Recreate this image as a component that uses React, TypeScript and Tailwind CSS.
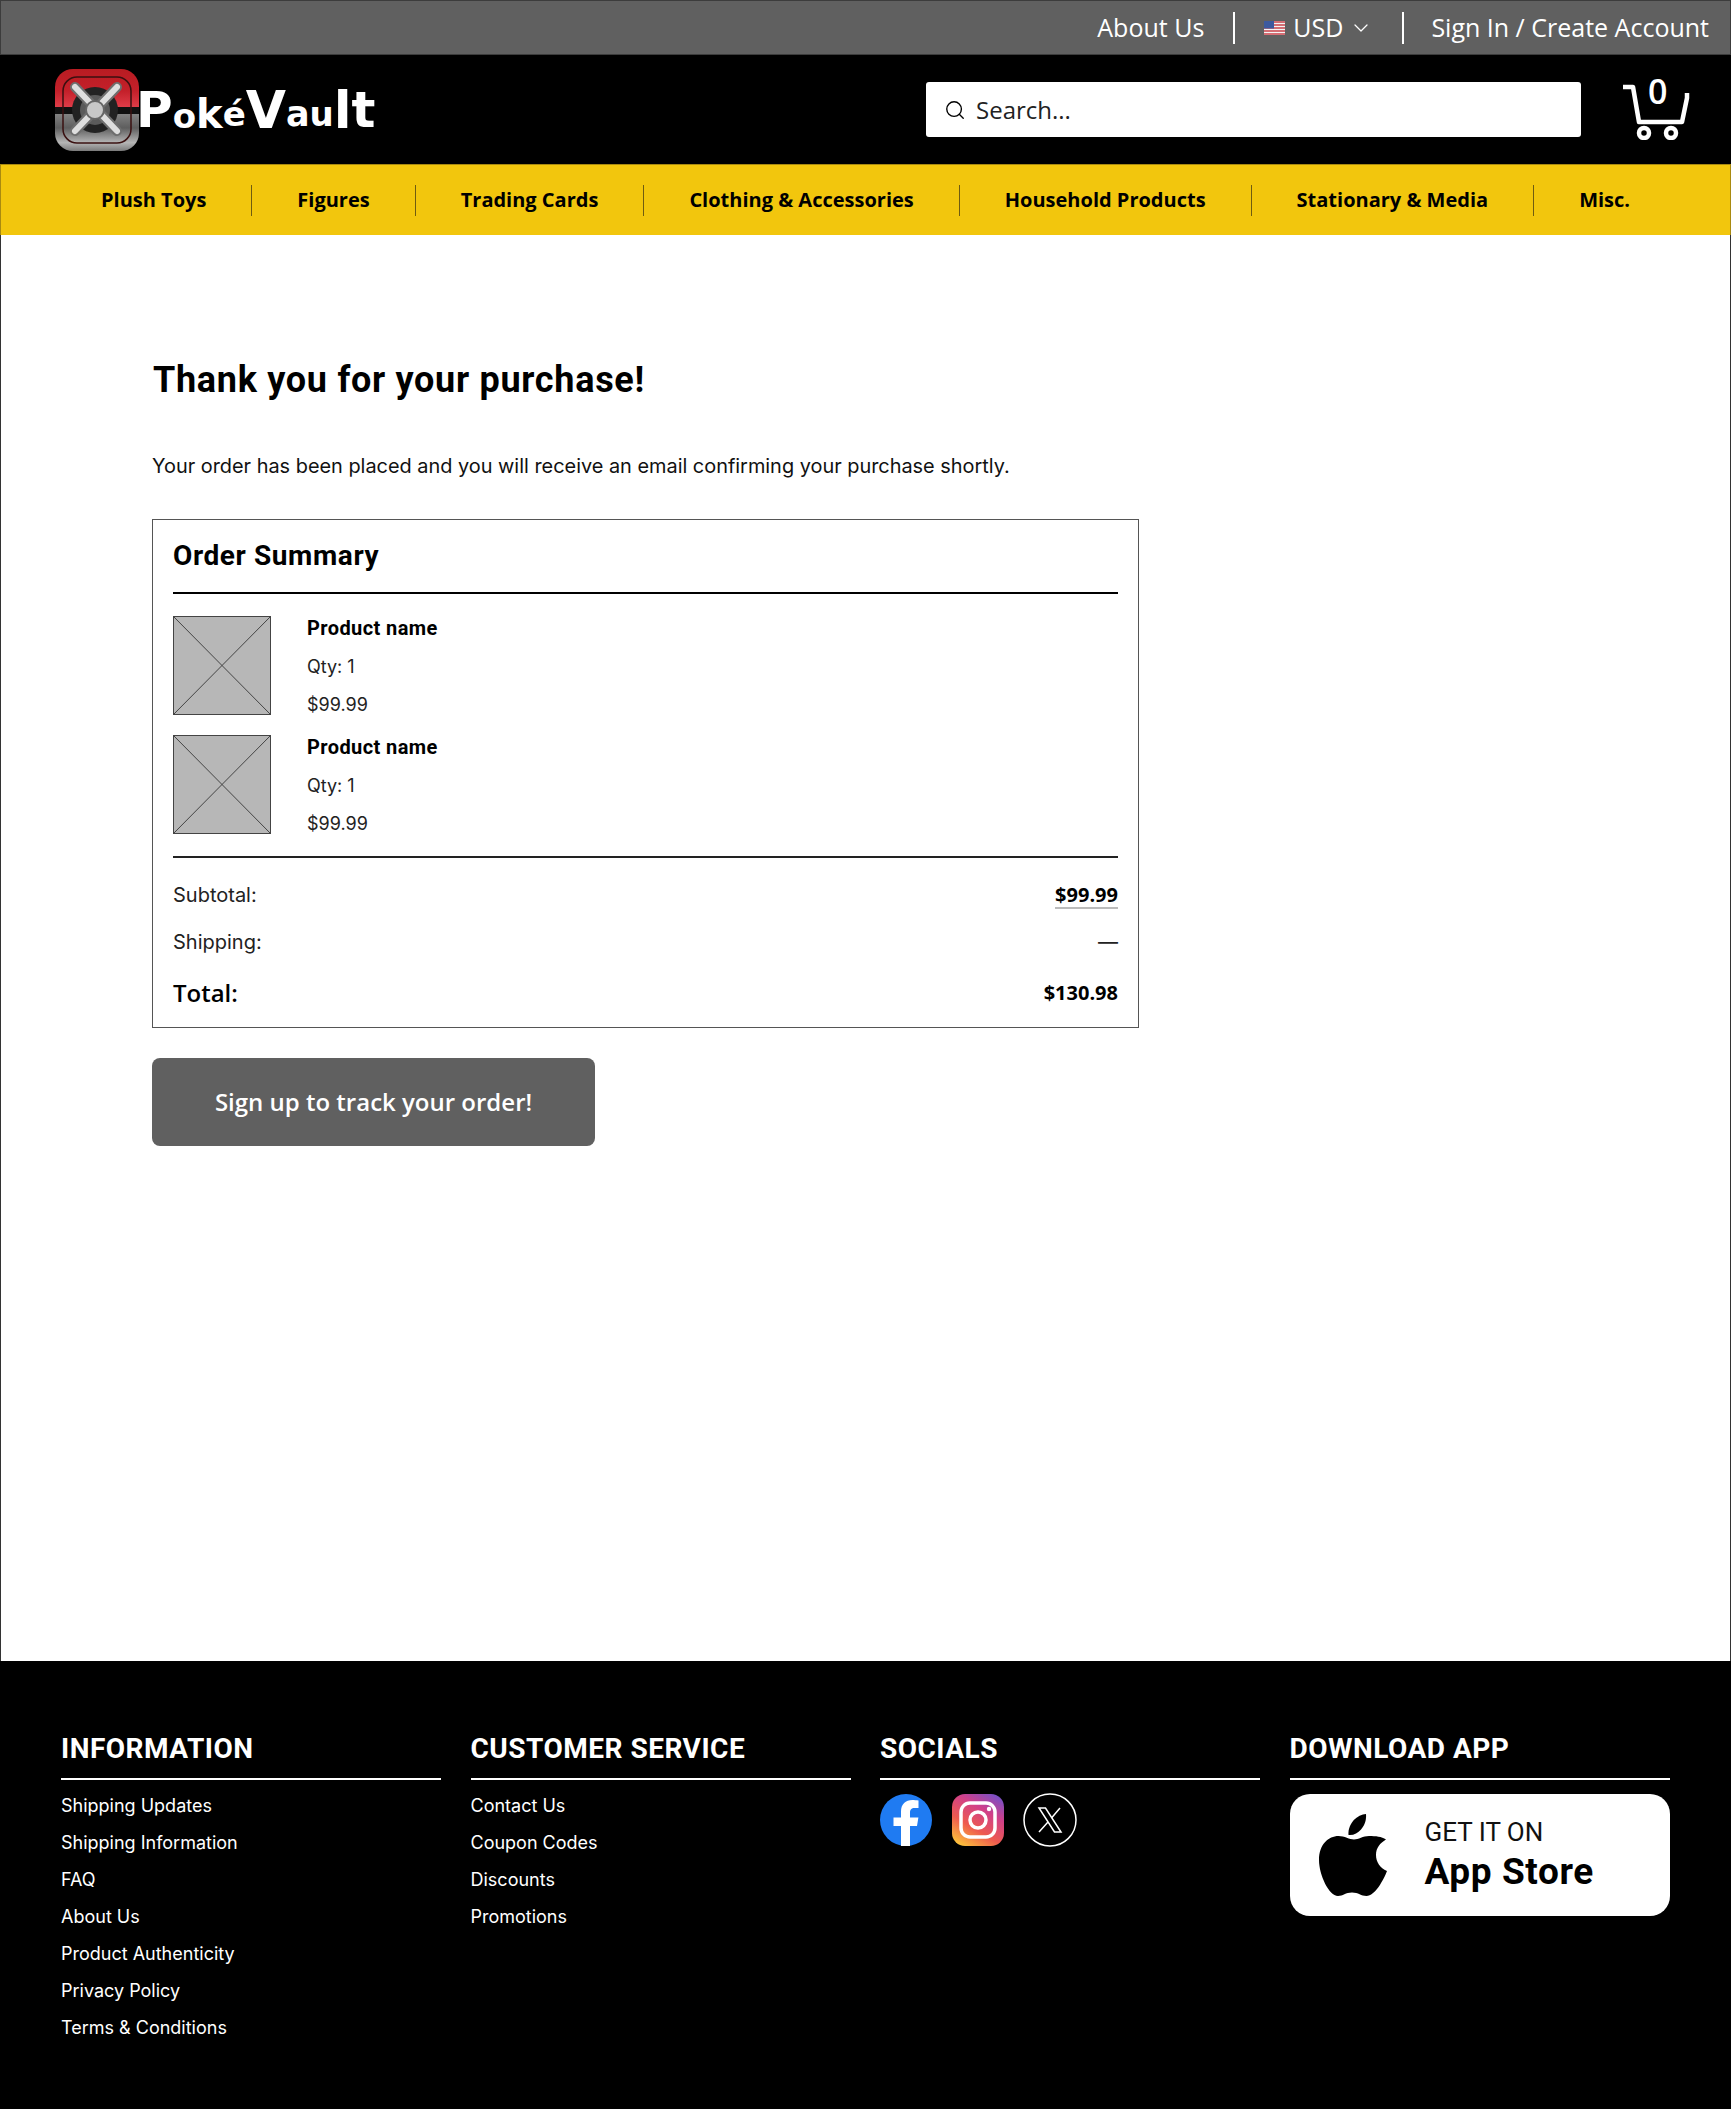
import { ChevronDown, Search } from "lucide-react";

const NAV = [
  "Plush Toys",
  "Figures",
  "Trading Cards",
  "Clothing & Accessories",
  "Household Products",
  "Stationary & Media",
  "Misc.",
];

const FOOTER_INFO = [
  "Shipping Updates",
  "Shipping Information",
  "FAQ",
  "About Us",
  "Product Authenticity",
  "Privacy Policy",
  "Terms & Conditions",
];

const FOOTER_SERVICE = ["Contact Us", "Coupon Codes", "Discounts", "Promotions"];

const OPEN = "font-['Open_Sans',sans-serif]";
// Exo 2 isn't installed, Roboto with some tracking is the nearest squarish bold
const HEAD = "font-['Roboto',sans-serif]";

function LogoMark() {
  return (
    <svg width="84" height="82" viewBox="0 0 84 82" className="shrink-0">
      <defs>
        <linearGradient id="red" x1="0" y1="0" x2="0" y2="1">
          <stop offset="0" stopColor="#b81c22" />
          <stop offset="0.55" stopColor="#c4202a" />
          <stop offset="1" stopColor="#e2404c" />
        </linearGradient>
        <linearGradient id="steel" x1="0" y1="0" x2="0" y2="1">
          <stop offset="0" stopColor="#8f8f8f" />
          <stop offset="0.45" stopColor="#5e5e5e" />
          <stop offset="0.8" stopColor="#b5b5b5" />
          <stop offset="1" stopColor="#7a7a7a" />
        </linearGradient>
        <clipPath id="mark">
          <rect width="84" height="82" rx="18" />
        </clipPath>
      </defs>
      <g clipPath="url(#mark)">
        <rect width="84" height="40" fill="url(#red)" />
        <rect y="40" width="84" height="42" fill="url(#steel)" />
        <rect y="38" width="84" height="7" fill="#111" />
      </g>
      <rect x="8" y="8" width="68" height="66" rx="14" fill="none" stroke="#3a1010" strokeWidth="1.5" />
      <circle cx="40" cy="41" r="23" fill="#222" />
      <circle cx="40" cy="41" r="15" fill="#5a5a5a" />
      <path d="M20 18 62 62M62 18 20 62" stroke="#6e6e6e" strokeWidth="10" strokeLinecap="round" />
      <path d="M20 18 62 62M62 18 20 62" stroke="#dedede" strokeWidth="6" strokeLinecap="round" />
      <circle cx="40" cy="41" r="9" fill="#c8c8c8" stroke="#666" strokeWidth="2" />
    </svg>
  );
}

function Wordmark() {
  return (
    <span className="ml-[-3px] flex items-center font-['DejaVu_Sans',sans-serif] font-bold text-white">
      <span className="inline-block text-[50px] leading-none">P</span>
      <span className="inline-block translate-y-[6px] text-[34px] leading-none">o</span>
      <span className="inline-block translate-y-[4px] text-[40px] leading-none">k</span>
      <span className="inline-block translate-y-[4px] text-[34px] leading-none">é</span>
      <span className="inline-block text-[52px] leading-none">V</span>
      <span className="inline-block translate-y-[5px] text-[35px] leading-none">a</span>
      <span className="inline-block translate-y-[4px] text-[34px] leading-none">u</span>
      <span className="inline-block text-[52px] leading-none">l</span>
      <span className="inline-block text-[50px] leading-none">t</span>
    </span>
  );
}

function UsFlag() {
  return (
    <svg width="21" height="14" viewBox="0 0 21 14">
      <rect width="21" height="14" fill="#f4f4f4" />
      <path d="M0 1h21M0 4h21M0 7h21M0 10h21M0 13h21" stroke="#c9424a" strokeWidth="1.5" />
      <rect width="10" height="7.5" fill="#3d5a9e" />
    </svg>
  );
}

function Cart() {
  return (
    <div className="relative h-[60px] w-[68px]">
      <svg width="68" height="60" viewBox="0 0 68 60" fill="none" stroke="white" strokeWidth="4.5">
        <path d="M1 7h10l6 35h43l5-24v-5" strokeLinejoin="round" />
        <circle cx="22" cy="53" r="5" />
        <circle cx="49" cy="53" r="5" />
      </svg>
      <span className={`${OPEN} absolute left-[26px] top-[-9px] text-[34px] font-semibold leading-[40px] text-white`}>0</span>
    </div>
  );
}

function Placeholder() {
  return (
    <svg width="98" height="99" viewBox="0 0 98 99" className="shrink-0">
      <rect x="0.5" y="0.5" width="97" height="98" fill="#b7b7b7" stroke="#444" />
      <path d="M0 0 98 99M98 0 0 99" stroke="#444" strokeWidth="1" />
    </svg>
  );
}

function Product() {
  return (
    <div className="flex gap-[36px]">
      <Placeholder />
      <div className="flex flex-col">
        <div className={`${HEAD} h-[39px] text-[20px] font-bold leading-[24px] tracking-[0.4px] text-black`}>Product name</div>
        <div className="h-[39px] text-[18px] leading-[24px] text-[#222]">Qty: 1</div>
        <div className="text-[18px] leading-[22px] text-[#222]">$99.99</div>
      </div>
    </div>
  );
}

function FooterCol({ title, children }: { title: string; children: React.ReactNode }) {
  return (
    <div className="w-[380px]">
      <h3 className={`${HEAD} border-b-2 border-white pb-[12px] pt-[2px] text-[28px] font-bold leading-[34px] tracking-[0.5px] text-white`}>{title}</h3>
      {children}
    </div>
  );
}

function LinkList({ items }: { items: string[] }) {
  return (
    <ul className="mt-[7px]">
      {items.map((item) => (
        <li key={item} className="text-[18px] leading-[37px] text-white">
          {item}
        </li>
      ))}
    </ul>
  );
}

function Socials() {
  return (
    <div className="mt-[13px] flex items-center gap-[19.5px]">
      <svg width="52" height="52" viewBox="0 0 52 52">
        <circle cx="26" cy="26" r="26" fill="#1f7bf2" />
        <path
          d="M30 52V32h7l1.400-8.500H30v-5c0-2.500 1.200-4.500 4.800-4.500H38.500V6.500C36.500 6.200 34 6 32.500 6 25.500 6 21 10.200 21 17.500v6h-7.500V32H21v20z"
          fill="white"
        />
      </svg>
      <svg width="52" height="52" viewBox="0 0 52 52" fill="none">
        <defs>
          <linearGradient id="ig" x1="0.2" y1="1" x2="0.8" y2="0">
            <stop offset="0" stopColor="#fdc03c" />
            <stop offset="0.35" stopColor="#ee5a4f" />
            <stop offset="0.7" stopColor="#d0408a" />
            <stop offset="1" stopColor="#7a4fc4" />
          </linearGradient>
        </defs>
        <rect width="52" height="52" rx="13" fill="url(#ig)" />
        <rect x="9" y="9" width="34" height="34" rx="9" stroke="white" strokeWidth="3.500" />
        <circle cx="26" cy="26" r="8" stroke="white" strokeWidth="3.500" />
        <circle cx="37" cy="15" r="2.200" fill="white" />
      </svg>
      <svg width="54" height="54" viewBox="0 0 54 54" fill="none" stroke="white">
        <circle cx="27" cy="27" r="26" strokeWidth="1.500" />
        <path d="M16 15h6.500L38 39h-6.500z" strokeWidth="1.500" />
        <path d="M37 15 28.500 25M25 29l-9 10" strokeWidth="1.500" />
      </svg>
    </div>
  );
}

function AppBadge() {
  return (
    <div className="mt-[14px] flex h-[122px] items-center rounded-[20px] bg-white pl-[29px]">
      <svg width="68" height="82" viewBox="0 0 68 82" fill="black" className="shrink-0">
        <path d="M47 0c.6 7-2 12-5 15.500-3.200 3.700-7.500 6-12.500 5.500-.6-6 2.300-11.500 5.300-15C38 2.700 43 .3 47 0z" />
        <path d="M50 22c-6 0-10.500 3.500-15 3.500S25.500 22 19.500 22C9.500 22 0 30.500 0 46c0 15 10 36 19 36 5 0 7.500-3.500 14-3.500S42 82 47.500 82C56 82 64.500 66 68 57c-7-3-11-9-11-16 0-7 4-12 10-15.500C62.500 22.500 57 22 50 22z" />
      </svg>
      <div className="ml-[38px] flex flex-col">
        <span className={`${HEAD} text-[26px] leading-[34px] text-[#111]`}>GET IT ON</span>
        <span className={`${HEAD} text-[37px] font-bold leading-[46px] tracking-[0.6px] text-black`}>App Store</span>
      </div>
    </div>
  );
}

export default function App() {
  return (
    <div className="flex min-h-[2109px] flex-col bg-white font-['Inter',sans-serif]">
      <header>
        <div className={`${OPEN} flex h-[55px] items-center justify-end border border-[#3c3c3c] bg-[#606060] pr-[21px] text-[25px] leading-none text-white`}>
          <span>About Us</span>
          <span className="mx-[29px] h-[32px] w-[2px] bg-white" />
          <UsFlag />
          <span className="ml-[8px]">USD</span>
          <ChevronDown className="ml-[6px] h-[24px] w-[24px]" strokeWidth={1.25} />
          <span className="ml-[29px] mr-[27px] h-[32px] w-[2px] bg-white" />
          <span>Sign In / Create Account</span>
        </div>

        <div className="flex h-[109px] items-center bg-black pl-[55px]">
          <LogoMark />
          <Wordmark />
          <div className="ml-auto flex h-[55px] w-[655px] items-center rounded-[3px] bg-white pl-[18px]">
            <Search className="h-[22px] w-[22px] text-black" strokeWidth={1.5} />
            <span className={`${OPEN} ml-[10px] text-[24px] text-[#222]`}>Search...</span>
          </div>
          <div className="ml-[41px] mr-[41px]">
            <Cart />
          </div>
        </div>

        <nav className="flex h-[71px] items-center justify-center border border-b-0 border-[#a98a10] bg-[#f2c60d]">
          {NAV.map((item, i) => (
            <span
              key={item}
              className={`${OPEN} flex h-[31px] items-center px-[45px] text-[20px] font-bold leading-none text-black ${
                i < NAV.length - 1 ? "border-r border-[#6f5c10]" : ""
              }`}
            >
              {item}
            </span>
          ))}
        </nav>
      </header>

      <main className="flex-1 border-x border-[#333] pl-[151px] pt-[123px]">
        <h1 className={`${HEAD} pl-[1px] text-[36px] font-bold leading-[44px] tracking-[0.7px] text-black`}>Thank you for your purchase!</h1>
        <p className="mt-[49px] text-[19.9px] leading-[30px] text-[#111]">
          Your order has been placed and you will receive an email confirming your purchase shortly.
        </p>

        <section className="mt-[38px] w-[987px] border border-[#555] px-[20px] pb-[18px] pt-[18px]">
          <h2 className={`${HEAD} border-b-2 border-black pb-[18px] text-[28px] font-bold leading-[36px] tracking-[0.6px] text-black`}>Order Summary</h2>
          <div className="flex flex-col gap-[19px] border-b-2 border-[#222] pb-[21px] pt-[22px]">
            <Product />
            <Product />
          </div>
          <div className="mt-[22px] flex items-center justify-between text-[20px] leading-[30px] text-[#222]">
            <span>Subtotal:</span>
            <span className={`${OPEN} border-b-2 border-[#bbb] text-[20px] font-bold leading-[25px] text-black`}>$99.99</span>
          </div>
          <div className="mt-[17px] flex items-center justify-between text-[20px] leading-[30px] text-[#222]">
            <span>Shipping:</span>
            <span>—</span>
          </div>
          <div className="mt-[20px] flex items-center justify-between leading-[32px] text-black">
            <span className={`${OPEN} text-[24px] font-semibold`}>Total:</span>
            <span className={`${OPEN} text-[20px] font-bold`}>$130.98</span>
          </div>
        </section>

        <button className={`${OPEN} mt-[30px] flex h-[88px] w-[443px] items-center justify-center rounded-[8px] bg-[#606060] text-[24px] font-semibold text-white`}>
          Sign up to track your order!
        </button>
      </main>

      <footer className="flex h-[448px] gap-[29.5px] bg-black pl-[61px] pt-[69px]">
        <FooterCol title="INFORMATION">
          <LinkList items={FOOTER_INFO} />
        </FooterCol>
        <FooterCol title="CUSTOMER SERVICE">
          <LinkList items={FOOTER_SERVICE} />
        </FooterCol>
        <FooterCol title="SOCIALS">
          <Socials />
        </FooterCol>
        <FooterCol title="DOWNLOAD APP">
          <AppBadge />
        </FooterCol>
      </footer>
    </div>
  );
}
